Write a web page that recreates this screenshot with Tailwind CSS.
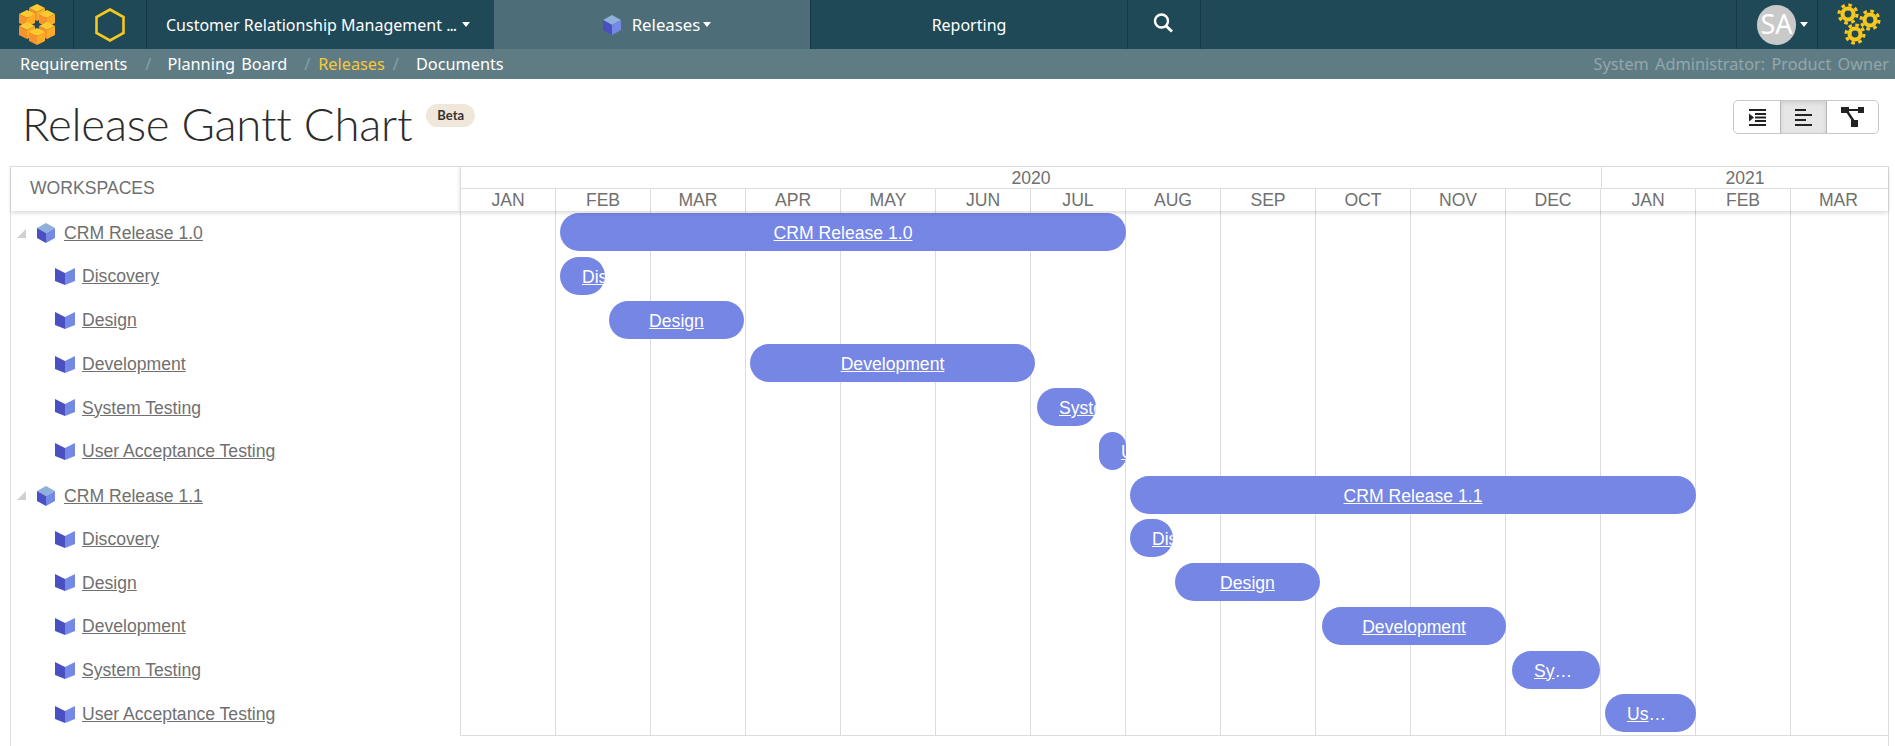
<!DOCTYPE html>
<html lang="en">
<head>
    <meta charset="UTF-8">
    <title>Release Gantt Chart</title>
    <script src="https://cdn.jsdelivr.net/npm/@tailwindcss/browser@4"></script>
</head>
<body class="h-screen overflow-hidden flex flex-col bg-white font-['Liberation_Sans',sans-serif] text-[17.6px] text-[#707070]">

    <!-- shared icons -->
    <svg class="hidden">
        <symbol id="cube" viewBox="0 0 18 20">
            <polygon points="9,0 18,5 9,10 0,5" fill="#8fb0da"/>
            <polygon points="0,5 9,10 9,20 0,15" fill="#4a4fc2"/>
            <polygon points="18,5 9,10 9,20 18,15" fill="#7488e6"/>
        </symbol>
        <symbol id="phase" viewBox="0 0 20 17">
            <polygon points="0,0 10,5 10,17 0,13" fill="#4a4fc2"/>
            <polygon points="20,0 10,5 10,17 20,13" fill="#7488e6"/>
        </symbol>
        <symbol id="block" viewBox="0 0 16 17">
            <polygon points="8,0 16,4 8,8 0,4" fill="#fdcb2f"/>
            <polygon points="0,4 8,8 8,17 0,13" fill="#f8922b"/>
            <polygon points="16,4 8,8 8,17 16,13" fill="#fbab25"/>
        </symbol>
        <symbol id="gear" viewBox="0 0 24 24">
            <circle cx="12" cy="12" r="6" fill="none" stroke="#f6c81e" stroke-width="4.5"/>
            <circle cx="12" cy="12" r="9.8" fill="none" stroke="#f6c81e" stroke-width="3.4" stroke-dasharray="3.9 3.8"/>
        </symbol>
    </svg>

    <!-- top nav -->
    <nav class="h-[49px] shrink-0 flex bg-[#204958] text-white font-['Noto_Sans',sans-serif] text-[16px]">
        <div class="w-[74px] border-r border-[#153846] flex items-center justify-center">
            <svg class="w-[36px] h-[41px]" viewBox="0 0 36 41">
                <use href="#block" x="10" y="0" width="16" height="17"/>
                <use href="#block" x="0" y="6" width="16" height="17"/>
                <use href="#block" x="20" y="6" width="16" height="17"/>
                <use href="#block" x="0" y="18" width="16" height="17"/>
                <use href="#block" x="20" y="18" width="16" height="17"/>
                <use href="#block" x="10" y="24" width="16" height="17"/>
            </svg>
        </div>
        <div class="w-[73px] border-r border-[#153846] flex items-center justify-center">
            <svg class="w-[30px] h-[34px]" viewBox="0 0 30 34"><polygon points="15,1.5 28.5,9 28.5,25 15,32.5 1.5,25 1.5,9" fill="none" stroke="#f6c81e" stroke-width="2.6"/></svg>
        </div>
        <div class="w-[347px] pl-[19px] flex items-center gap-[6px]">
            <span class="whitespace-nowrap">Customer Relationship Management <span class="tracking-[-1px]">...</span></span>
            <span class="w-0 h-0 border-x-[4.5px] border-x-transparent border-t-[5px] border-t-white"></span>
        </div>
        <div class="w-[317px] bg-[#4d6e78] border-r border-[#153846] flex items-center justify-center gap-[3px] pl-[10px]">
            <svg class="w-[18px] h-[20px] mr-[8px]"><use href="#cube"/></svg>
            <span class="text-[16.8px]">Releases</span>
            <span class="w-0 h-0 border-x-[4.5px] border-x-transparent border-t-[5px] border-t-white"></span>
        </div>
        <div class="w-[317px] border-r border-[#153846] flex items-center justify-center">Reporting</div>
        <div class="w-[73px] border-r border-[#153846] flex items-center justify-center">
            <svg class="w-[21px] h-[20px] mb-[3px] mr-[2px]" viewBox="0 0 21 20" fill="none" stroke="#fff"><circle cx="8.5" cy="8" r="6.5" stroke-width="2.4"/><path d="M13 13 L19 18.5" stroke-width="3"/></svg>
        </div>
        <div class="flex-1"></div>
        <div class="w-[82px] border-x border-[#153846] flex items-center pl-[20px] gap-[4px]">
            <span class="w-[39px] h-[40px] shrink-0 rounded-full bg-[#c9c9c9] flex items-center justify-center text-[27px] font-['Noto_Sans',sans-serif]">SA</span>
            <span class="w-0 h-0 border-x-[4.5px] border-x-transparent border-t-[5px] border-t-white"></span>
        </div>
        <div class="w-[77px] relative">
            <svg class="absolute left-[19px] top-[3px] w-[22px] h-[22px]"><use href="#gear"/></svg>
            <svg class="absolute left-[41px] top-[9px] w-[22px] h-[22px]"><use href="#gear"/></svg>
            <svg class="absolute left-[26px] top-[23px] w-[22px] h-[22px]"><use href="#gear"/></svg>
        </div>
    </nav>

    <!-- sub nav -->
    <div class="h-[30px] shrink-0 flex items-center justify-between bg-[#5f7c84] pl-[20px] pr-[6px] font-['Noto_Sans',sans-serif] text-[16.3px] [word-spacing:2px] text-white">
        <div class="flex items-center">
            <span>Requirements</span>
            <span class="text-[#8ba1a7] ml-[18px] mr-[16px]">/</span>
            <span>Planning Board</span>
            <span class="text-[#8ba1a7] ml-[17px] mr-[8px]">/</span>
            <span class="text-[#f9c83a]">Releases</span>
            <span class="text-[#8ba1a7] ml-[8px] mr-[17px]">/</span>
            <span>Documents</span>
        </div>
        <span class="text-[#93a7ac]">System Administrator: Product Owner</span>
    </div>

    <!-- title -->
    <div class="h-[87px] shrink-0 flex justify-between pl-[22px] pr-[16px]">
        <div class="flex items-start">
            <h1 class="mt-[17px] text-[45.5px] leading-[56px] font-light text-[#2c2c2c] font-['Lato',sans-serif] tracking-[-0.2px]">Release Gantt Chart</h1>
            <span class="ml-[14px] mt-[25px] h-[23px] px-[11px] rounded-full bg-[#efe8da] text-[#333] text-[13px] font-bold leading-[23px] font-['Lato',sans-serif]">Beta</span>
        </div>
        <div class="mt-[21px] w-[146px] h-[34px] flex border border-[#c8c8c8] rounded-[5px] overflow-hidden">
            <div class="w-[46px] flex items-center justify-center">
                <svg class="w-[17px] h-[17px]" viewBox="0 0 17 17" fill="#222"><rect width="17" height="2"/><rect y="15" width="17" height="2"/><rect x="6" y="4" width="11" height="2"/><rect x="6" y="7.5" width="11" height="2"/><rect x="6" y="11" width="11" height="2"/><polygon points="0,4.5 5,8.5 0,12.5"/></svg>
            </div>
            <div class="w-[47px] bg-[#e6e6e6] border-x border-[#b5b5b5] shadow-[inset_0_2px_4px_rgba(0,0,0,0.1)] flex items-center justify-center">
                <svg class="w-[17px] h-[17px]" viewBox="0 0 17 17" fill="#222"><rect width="11" height="2"/><rect y="5" width="17" height="2"/><rect y="10" width="11" height="2"/><rect y="15" width="17" height="2"/></svg>
            </div>
            <div class="flex-1 flex items-center justify-center">
                <svg class="w-[23px] h-[20px]" viewBox="0 0 23 20" fill="#222"><rect width="8" height="6"/><rect x="17" width="6" height="6"/><rect x="10" y="13" width="7" height="7"/><rect x="6" y="2" width="12" height="2"/><polygon points="5,5 8,5 14,14 11,14"/></svg>
            </div>
        </div>
    </div>

    <!-- gantt -->
    <div class="flex-1 min-h-0 ml-[10px] mr-[6px] flex border-x border-[#dcdcdc]">
        <div class="w-[449px] shrink-0">
            <div class="h-[45px] border-t border-[#dcdcdc] shadow-[0_2px_4px_rgba(0,0,0,0.15)] flex items-center pl-[19px] pb-[2px]">WORKSPACES</div>
            <div class="flex items-center h-[43.75px] pt-[1px] pl-[6px]">
                <span class="w-0 h-0 border-l-[9px] border-l-transparent border-b-[9px] border-b-[#d0d0d0] mr-[11px]"></span>
                <svg class="w-[18px] h-[20px] mr-[9px]"><use href="#cube"/></svg>
                <a class="underline">CRM Release 1.0</a>
            </div>
            <div class="flex items-center h-[43.75px] pl-[44px]"><svg class="w-[20px] h-[17px] mr-[7px]"><use href="#phase"/></svg><a class="underline">Discovery</a></div>
            <div class="flex items-center h-[43.75px] pl-[44px]"><svg class="w-[20px] h-[17px] mr-[7px]"><use href="#phase"/></svg><a class="underline">Design</a></div>
            <div class="flex items-center h-[43.75px] pl-[44px]"><svg class="w-[20px] h-[17px] mr-[7px]"><use href="#phase"/></svg><a class="underline">Development</a></div>
            <div class="flex items-center h-[43.75px] pl-[44px]"><svg class="w-[20px] h-[17px] mr-[7px]"><use href="#phase"/></svg><a class="underline">System Testing</a></div>
            <div class="flex items-center h-[43.75px] pl-[44px]"><svg class="w-[20px] h-[17px] mr-[7px]"><use href="#phase"/></svg><a class="underline">User Acceptance Testing</a></div>
            <div class="flex items-center h-[43.75px] pt-[1px] pl-[6px]">
                <span class="w-0 h-0 border-l-[9px] border-l-transparent border-b-[9px] border-b-[#d0d0d0] mr-[11px]"></span>
                <svg class="w-[18px] h-[20px] mr-[9px]"><use href="#cube"/></svg>
                <a class="underline">CRM Release 1.1</a>
            </div>
            <div class="flex items-center h-[43.75px] pl-[44px]"><svg class="w-[20px] h-[17px] mr-[7px]"><use href="#phase"/></svg><a class="underline">Discovery</a></div>
            <div class="flex items-center h-[43.75px] pl-[44px]"><svg class="w-[20px] h-[17px] mr-[7px]"><use href="#phase"/></svg><a class="underline">Design</a></div>
            <div class="flex items-center h-[43.75px] pl-[44px]"><svg class="w-[20px] h-[17px] mr-[7px]"><use href="#phase"/></svg><a class="underline">Development</a></div>
            <div class="flex items-center h-[43.75px] pl-[44px]"><svg class="w-[20px] h-[17px] mr-[7px]"><use href="#phase"/></svg><a class="underline">System Testing</a></div>
            <div class="flex items-center h-[43.75px] pl-[44px]"><svg class="w-[20px] h-[17px] mr-[7px]"><use href="#phase"/></svg><a class="underline">User Acceptance Testing</a></div>
        </div>

        <div class="flex-1 min-w-0">
            <!-- year and month headers -->
            <div class="h-[45px] border-t border-l border-[#dcdcdc] shadow-[0_2px_4px_rgba(0,0,0,0.15)] relative z-10 bg-white">
                <div class="h-[22px] flex border-b border-[#dcdcdc] leading-[22px] text-center">
                    <div class="w-[1140px]">2020</div>
                    <div class="flex-1 border-l border-[#dcdcdc]">2021</div>
                </div>
                <div class="h-[22px] grid grid-cols-[repeat(15,95px)] leading-[22px] text-center divide-x divide-[#dcdcdc]">
                    <div>JAN</div><div>FEB</div><div>MAR</div><div>APR</div><div>MAY</div><div>JUN</div><div>JUL</div><div>AUG</div><div>SEP</div><div>OCT</div><div>NOV</div><div>DEC</div><div>JAN</div><div>FEB</div><div>MAR</div>
                </div>
            </div>
            <!-- bars over the month grid -->
            <div class="relative h-[526px] border-b border-l border-[#dcdcdc] text-white">
                <div class="absolute inset-0 grid grid-cols-[repeat(15,95px)] divide-x divide-[#dcdcdc]">
                    <div></div><div></div><div></div><div></div><div></div><div></div><div></div><div></div><div></div><div></div><div></div><div></div><div></div><div></div><div></div>
                </div>
                <div class="relative -ml-px -mt-px">
                    <div class="h-[43.75px] pt-[3px]"><div class="ml-[100px] w-[566px] h-[38px] leading-[40px] rounded-full bg-[#7586e4] px-[22px] text-center truncate"><a class="underline">CRM Release 1.0</a></div></div>
                    <div class="h-[43.75px] pt-[3px]"><div class="ml-[100px] w-[45px] h-[38px] leading-[40px] rounded-full bg-[#7586e4] pl-[22px] text-left overflow-hidden whitespace-nowrap"><a class="underline">Discovery</a></div></div>
                    <div class="h-[43.75px] pt-[3px]"><div class="ml-[149px] w-[135px] h-[38px] leading-[40px] rounded-full bg-[#7586e4] px-[22px] text-center truncate"><a class="underline">Design</a></div></div>
                    <div class="h-[43.75px] pt-[3px]"><div class="ml-[290px] w-[285px] h-[38px] leading-[40px] rounded-full bg-[#7586e4] px-[22px] text-center truncate"><a class="underline">Development</a></div></div>
                    <div class="h-[43.75px] pt-[3px]"><div class="ml-[577px] w-[59px] h-[38px] leading-[40px] rounded-full bg-[#7586e4] pl-[22px] text-left overflow-hidden whitespace-nowrap"><a class="underline">System Testing</a></div></div>
                    <div class="h-[43.75px] pt-[3px]"><div class="ml-[639px] w-[27px] h-[38px] leading-[40px] rounded-full bg-[#7586e4] pl-[22px] text-left overflow-hidden whitespace-nowrap"><a class="underline">User Acceptance Testing</a></div></div>
                    <div class="h-[43.75px] pt-[3px]"><div class="ml-[670px] w-[566px] h-[38px] leading-[40px] rounded-full bg-[#7586e4] px-[22px] text-center truncate"><a class="underline">CRM Release 1.1</a></div></div>
                    <div class="h-[43.75px] pt-[3px]"><div class="ml-[670px] w-[43px] h-[38px] leading-[40px] rounded-full bg-[#7586e4] pl-[22px] text-left overflow-hidden whitespace-nowrap"><a class="underline">Discovery</a></div></div>
                    <div class="h-[43.75px] pt-[3px]"><div class="ml-[715px] w-[145px] h-[38px] leading-[40px] rounded-full bg-[#7586e4] px-[22px] text-center truncate"><a class="underline">Design</a></div></div>
                    <div class="h-[43.75px] pt-[3px]"><div class="ml-[862px] w-[184px] h-[38px] leading-[40px] rounded-full bg-[#7586e4] px-[22px] text-center truncate"><a class="underline">Development</a></div></div>
                    <div class="h-[43.75px] pt-[3px]"><div class="ml-[1052px] w-[88px] h-[38px] leading-[40px] rounded-full bg-[#7586e4] px-[22px] text-left truncate"><a class="underline">System Testing</a></div></div>
                    <div class="h-[43.75px] pt-[3px]"><div class="ml-[1145px] w-[91px] h-[38px] leading-[40px] rounded-full bg-[#7586e4] px-[22px] text-left truncate"><a class="underline">User Acceptance Testing</a></div></div>
                </div>
            </div>
        </div>
    </div>
</body>
</html>
